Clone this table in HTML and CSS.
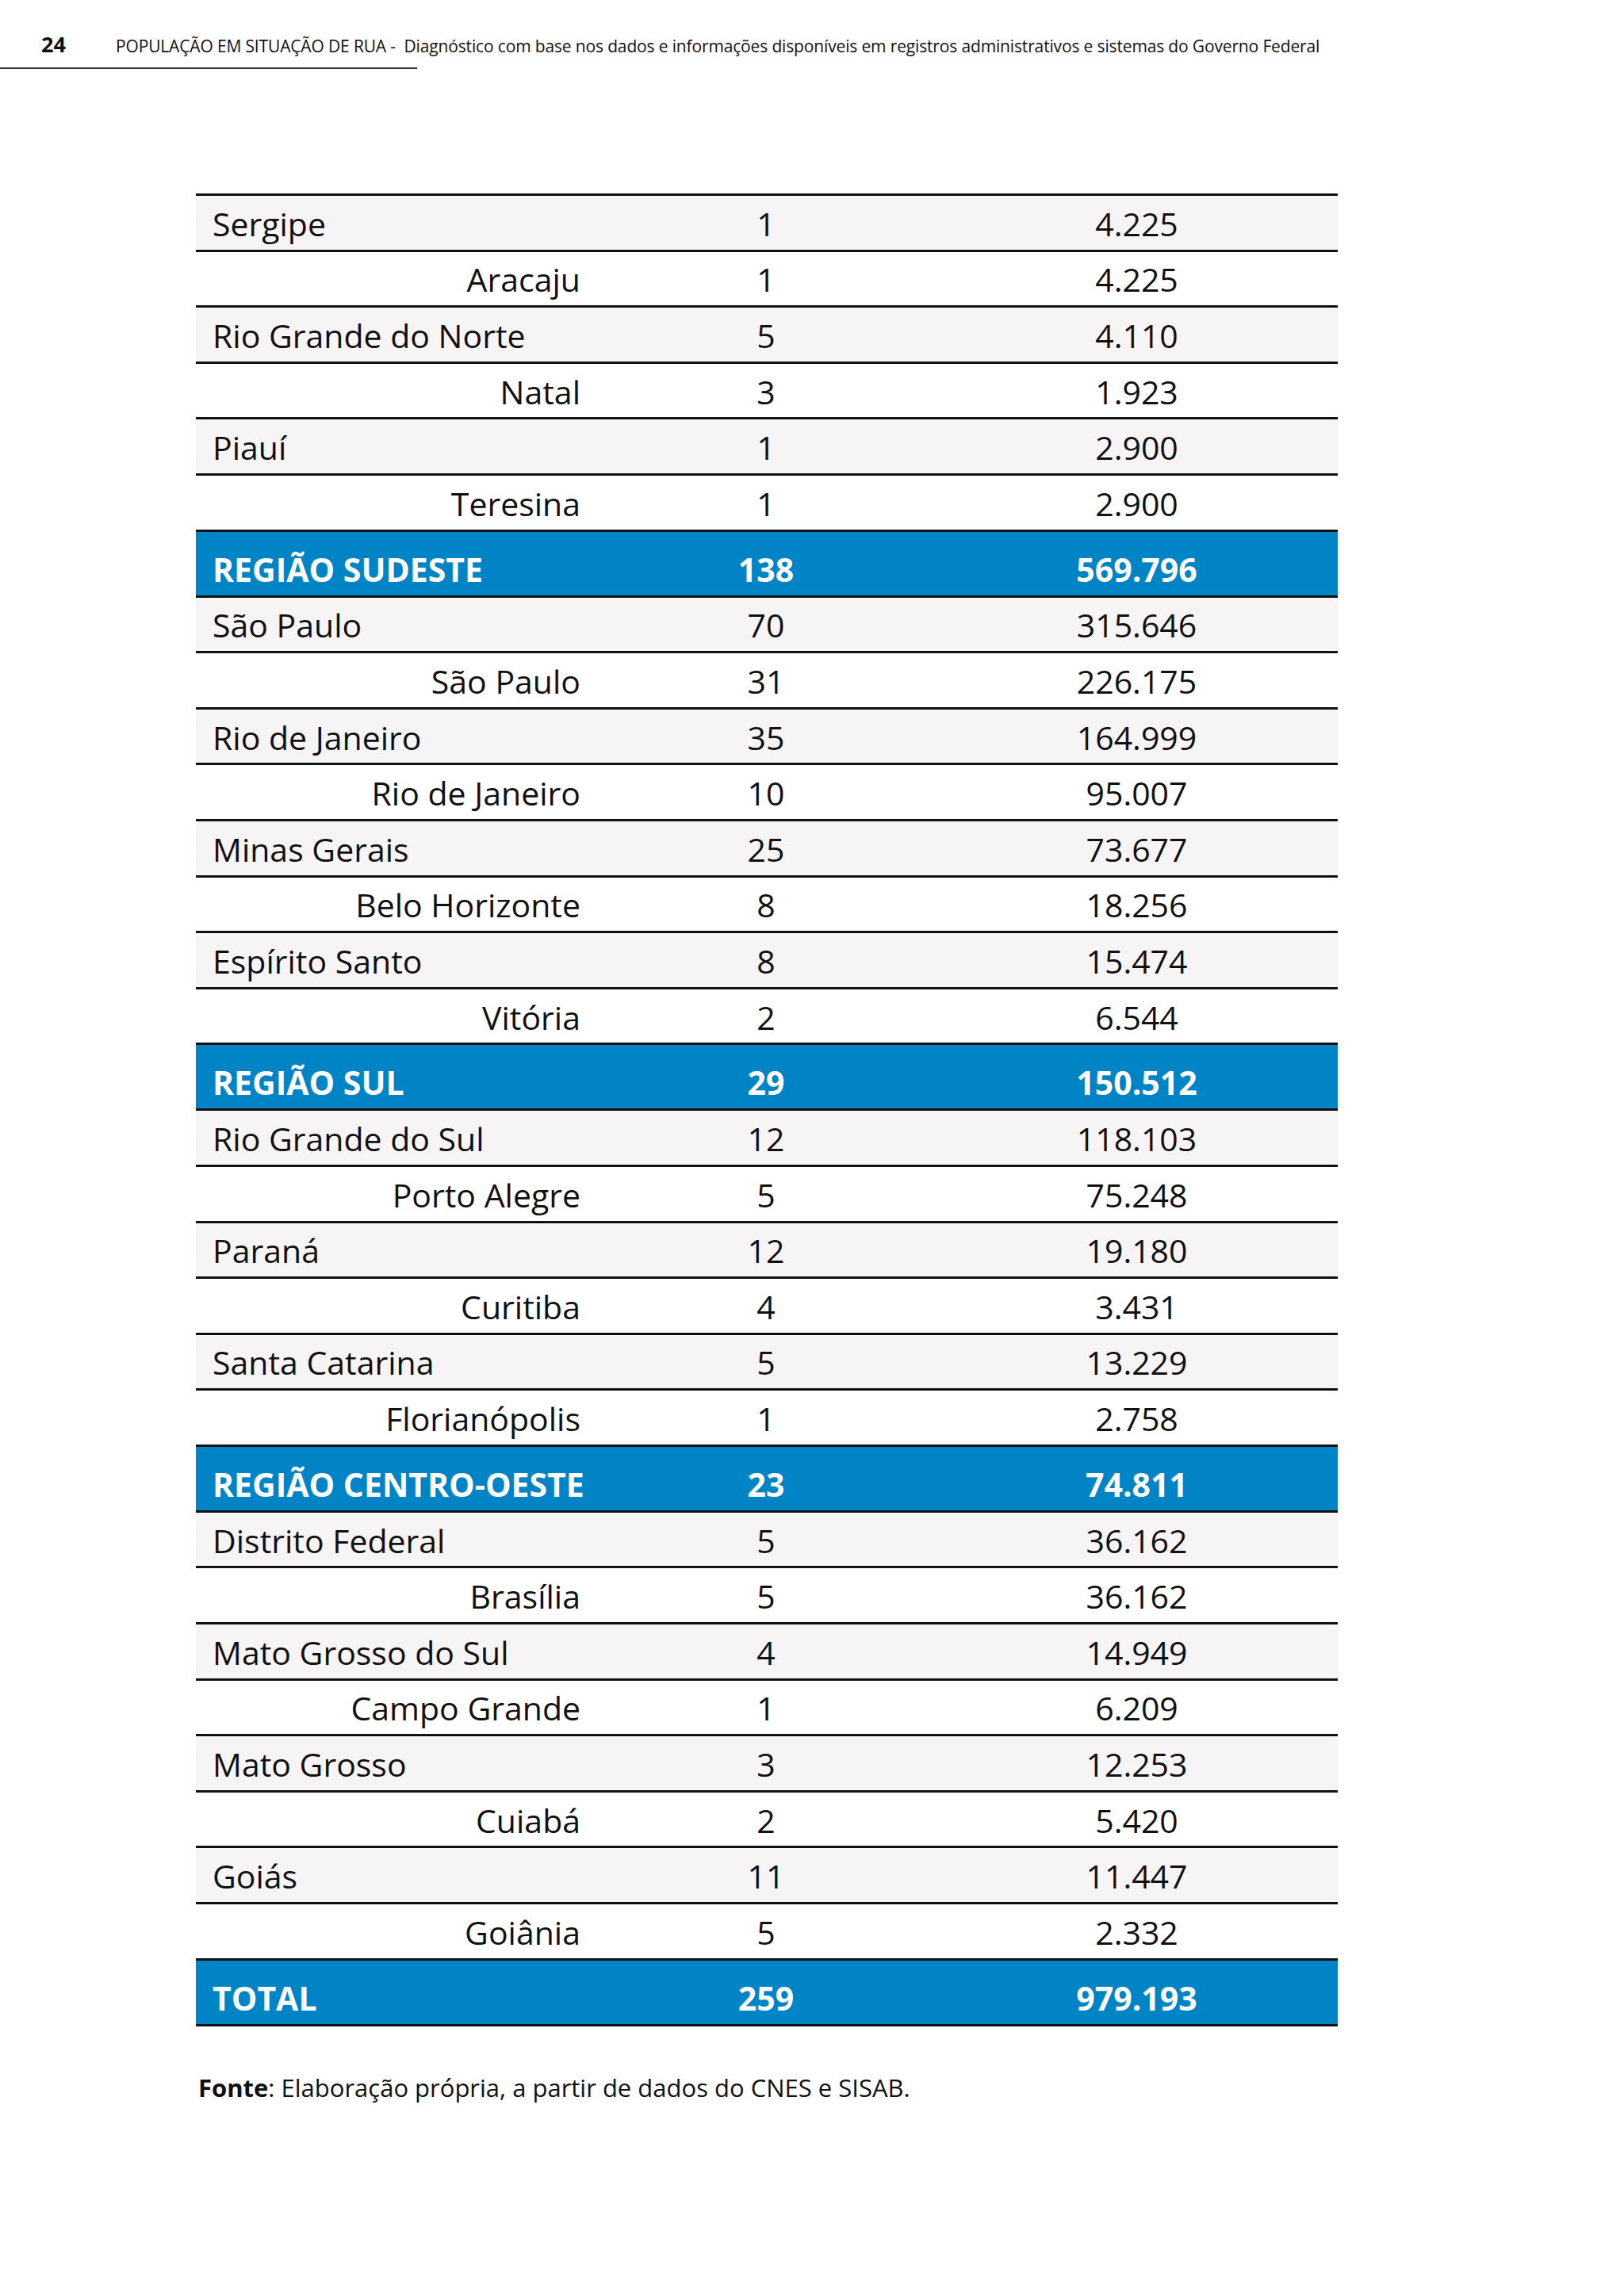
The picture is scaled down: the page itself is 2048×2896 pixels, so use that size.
FILE: index.html
```html
<!DOCTYPE html>
<html lang="pt-BR">
<head>
<meta charset="utf-8">
<title>População em situação de rua</title>
<link rel="stylesheet" href="styles.css">
</head>
<body>
<header class="page-head">
  <div class="head-line">
    <span class="page-num">24</span>
    <span class="head-title">POPULAÇÃO EM SITUAÇÃO DE RUA -&nbsp; Diagnóstico com base nos dados e informações disponíveis em registros administrativos e sistemas do Governo Federal</span>
  </div>
  <div class="head-rule"></div>
</header>

<main class="content">
  <div class="table">
    <div class="row state"><span class="c1">Sergipe</span><span class="c2">1</span><span class="c3">4.225</span></div>
    <div class="row city"><span class="c1">Aracaju</span><span class="c2">1</span><span class="c3">4.225</span></div>
    <div class="row state"><span class="c1">Rio Grande do Norte</span><span class="c2">5</span><span class="c3">4.110</span></div>
    <div class="row city"><span class="c1">Natal</span><span class="c2">3</span><span class="c3">1.923</span></div>
    <div class="row state"><span class="c1">Piauí</span><span class="c2">1</span><span class="c3">2.900</span></div>
    <div class="row city"><span class="c1">Teresina</span><span class="c2">1</span><span class="c3">2.900</span></div>

    <div class="row region"><span class="c1">REGIÃO SUDESTE</span><span class="c2">138</span><span class="c3">569.796</span></div>
    <div class="row state"><span class="c1">São Paulo</span><span class="c2">70</span><span class="c3">315.646</span></div>
    <div class="row city"><span class="c1">São Paulo</span><span class="c2">31</span><span class="c3">226.175</span></div>
    <div class="row state"><span class="c1">Rio de Janeiro</span><span class="c2">35</span><span class="c3">164.999</span></div>
    <div class="row city"><span class="c1">Rio de Janeiro</span><span class="c2">10</span><span class="c3">95.007</span></div>
    <div class="row state"><span class="c1">Minas Gerais</span><span class="c2">25</span><span class="c3">73.677</span></div>
    <div class="row city"><span class="c1">Belo Horizonte</span><span class="c2">8</span><span class="c3">18.256</span></div>
    <div class="row state"><span class="c1">Espírito Santo</span><span class="c2">8</span><span class="c3">15.474</span></div>
    <div class="row city"><span class="c1">Vitória</span><span class="c2">2</span><span class="c3">6.544</span></div>

    <div class="row region"><span class="c1">REGIÃO SUL</span><span class="c2">29</span><span class="c3">150.512</span></div>
    <div class="row state"><span class="c1">Rio Grande do Sul</span><span class="c2">12</span><span class="c3">118.103</span></div>
    <div class="row city"><span class="c1">Porto Alegre</span><span class="c2">5</span><span class="c3">75.248</span></div>
    <div class="row state"><span class="c1">Paraná</span><span class="c2">12</span><span class="c3">19.180</span></div>
    <div class="row city"><span class="c1">Curitiba</span><span class="c2">4</span><span class="c3">3.431</span></div>
    <div class="row state"><span class="c1">Santa Catarina</span><span class="c2">5</span><span class="c3">13.229</span></div>
    <div class="row city"><span class="c1">Florianópolis</span><span class="c2">1</span><span class="c3">2.758</span></div>

    <div class="row region"><span class="c1">REGIÃO CENTRO-OESTE</span><span class="c2">23</span><span class="c3">74.811</span></div>
    <div class="row state"><span class="c1">Distrito Federal</span><span class="c2">5</span><span class="c3">36.162</span></div>
    <div class="row city"><span class="c1">Brasília</span><span class="c2">5</span><span class="c3">36.162</span></div>
    <div class="row state"><span class="c1">Mato Grosso do Sul</span><span class="c2">4</span><span class="c3">14.949</span></div>
    <div class="row city"><span class="c1">Campo Grande</span><span class="c2">1</span><span class="c3">6.209</span></div>
    <div class="row state"><span class="c1">Mato Grosso</span><span class="c2">3</span><span class="c3">12.253</span></div>
    <div class="row city"><span class="c1">Cuiabá</span><span class="c2">2</span><span class="c3">5.420</span></div>
    <div class="row state"><span class="c1">Goiás</span><span class="c2">11</span><span class="c3">11.447</span></div>
    <div class="row city"><span class="c1">Goiânia</span><span class="c2">5</span><span class="c3">2.332</span></div>

    <div class="row region total"><span class="c1">TOTAL</span><span class="c2">259</span><span class="c3">979.193</span></div>
  </div>

  <p class="source"><strong>Fonte</strong>: Elaboração própria, a partir de dados do CNES e SISAB.</p>
</main>
</body>
</html>
```

FILE: styles.css
```css
html, body {
  margin: 0;
  padding: 0;
  background: #ffffff;
}

body {
  font-family: "Open Sans", "Noto Sans", "DejaVu Sans", sans-serif;
  color: #111111;
  width: 2048px;
  min-height: 2896px;
}

.page-head {
  padding-top: 37px;
}

.head-line {
  display: flex;
  align-items: baseline;
  padding-left: 52px;
  height: 38px;
}

.page-num {
  font-weight: 700;
  font-size: 27px;
  width: 94px;
  color: #111;
}

.head-title {
  font-size: 21px;
  font-weight: 500;
  color: #111;
  letter-spacing: -0.15px;
}

.head-rule {
  margin-top: 10px;
  width: 526px;
  height: 2px;
  background: #333;
}

.content {
  padding-left: 247px;
  padding-top: 157px;
}

.table {
  width: 1440px;
}

.row {
  display: grid;
  grid-template-columns: 505px 428px 1fr;
  align-items: center;
  box-sizing: border-box;
  height: 70.6px;
  border-top: 3px solid #111;
  font-size: 41px;
  padding-top: 2px;
}

.row.state {
  background: #f6f4f4;
}

.row.city {
  background: #ffffff;
}

.row .c1 {
  padding: 0 20px 0 21px;
  white-space: nowrap;
}

.row.city .c1 {
  text-align: right;
}

.row .c2,
.row .c3 {
  text-align: center;
  white-space: nowrap;
}

.row.region {
  height: 83px;
  background: #0084c6;
  color: #ffffff;
  font-weight: 700;
  font-size: 41px;
  padding-top: 14px;
}

.row.total {
  border-bottom: 3px solid #111;
  height: 86px;
}

.source {
  margin: 56px 0 0 3px;
  font-size: 31px;
  color: #111;
}

.source strong {
  font-weight: 700;
}
```
